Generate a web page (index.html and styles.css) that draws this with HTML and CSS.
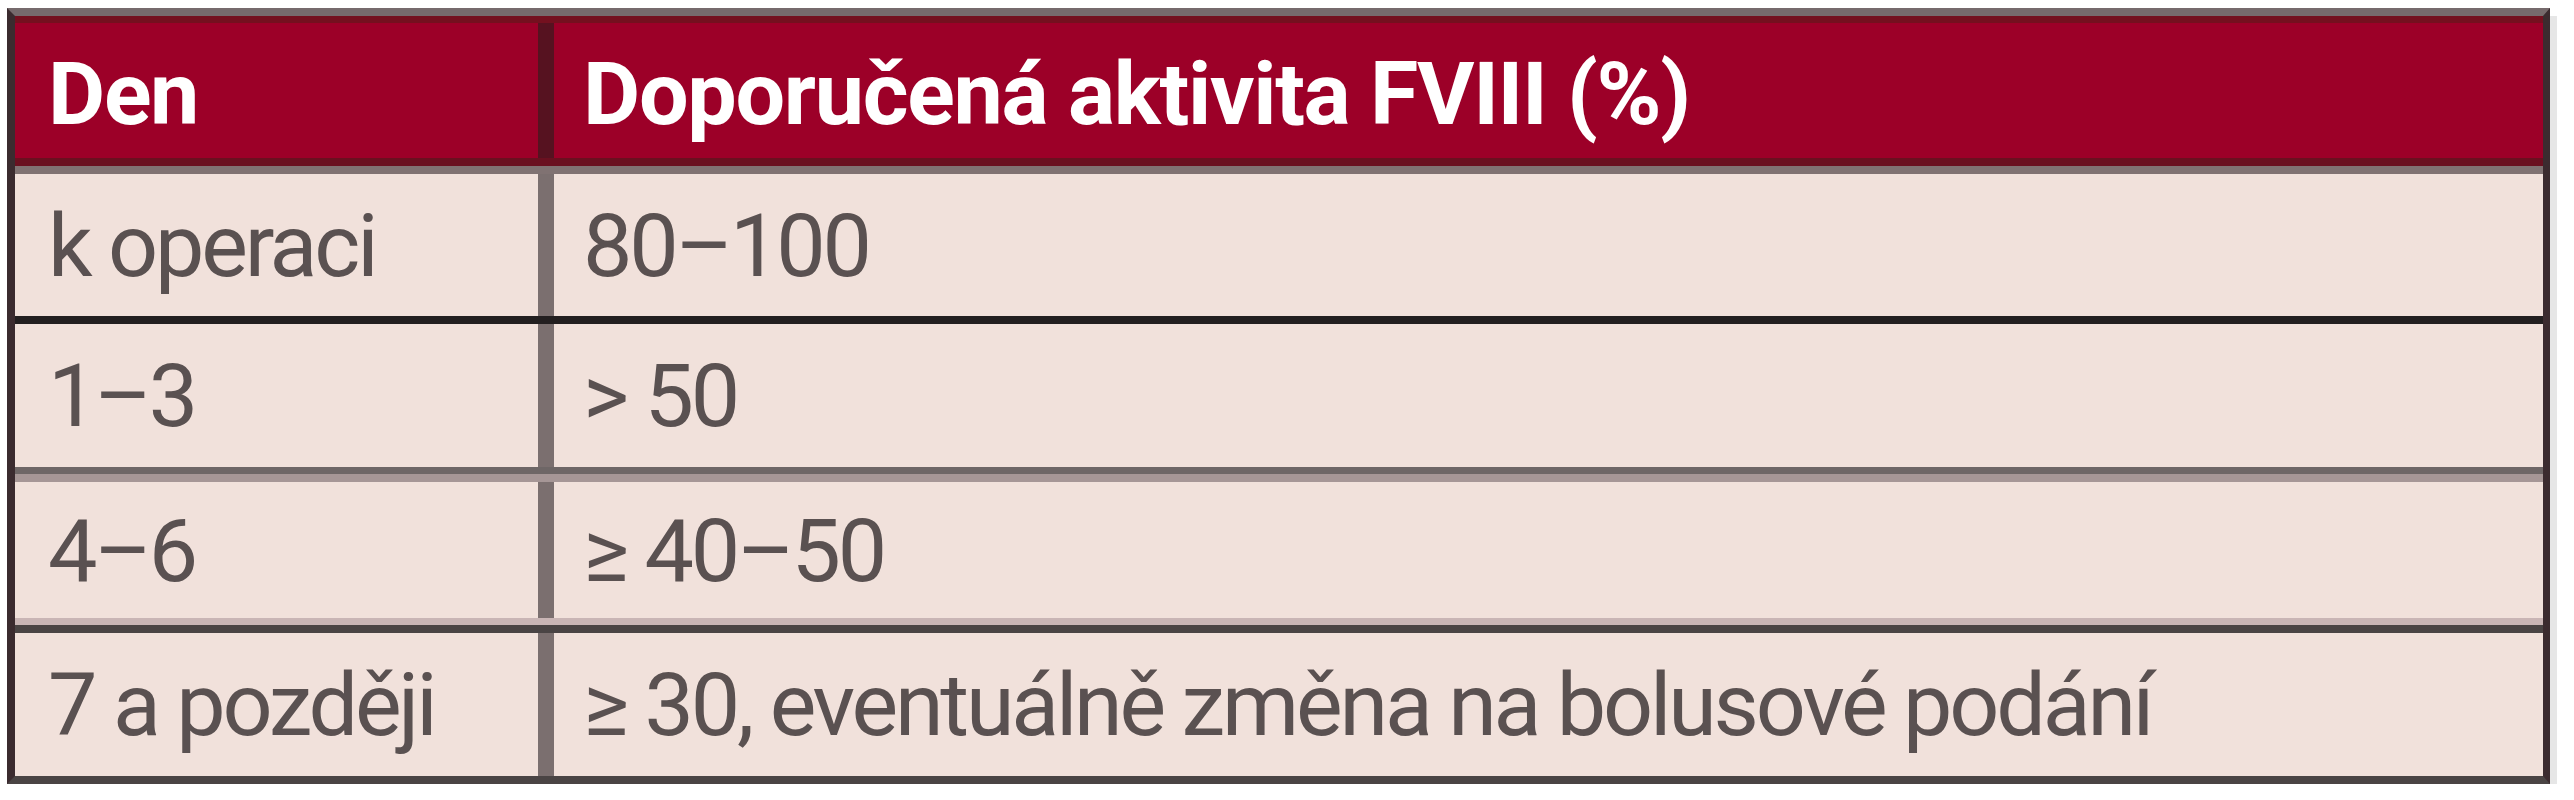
FILE: index.html
```html
<!DOCTYPE html>
<html lang="cs">
<head>
<meta charset="utf-8">
<title>Doporučená aktivita FVIII</title>
<link rel="stylesheet" href="styles.css">
</head>
<body>
<div class="table">
  <div class="row head">
    <div class="cell c1">Den</div>
    <div class="cell c2">Doporučená aktivita FVIII (%)</div>
  </div>
  <div class="row r1">
    <div class="cell c1">k operaci</div>
    <div class="cell c2">80–100</div>
  </div>
  <div class="row r2">
    <div class="cell c1">1–3</div>
    <div class="cell c2">&gt; 50</div>
  </div>
  <div class="row r3">
    <div class="cell c1">4–6</div>
    <div class="cell c2">≥ 40–50</div>
  </div>
  <div class="row r4">
    <div class="cell c1">7 a později</div>
    <div class="cell c2">≥ 30, eventuálně změna na bolusové podání</div>
  </div>
</div>
</body>
</html>
```

FILE: styles.css
```css
html, body {
  background: #ffffff;
}
body {
  margin: 8px 0 0 7px;
  font-family: Roboto, "Noto Sans", sans-serif;
}
.table {
  width: 2543px;
  box-sizing: border-box;
  border-left: 8px solid #3b2b2f;
  border-right: 7px solid #3b2b2f;
  border-top: 8px solid #766a6c;
  border-bottom: 8px solid #4a4444;
  background: #f1e1db;
  box-shadow: -7px 8px 0 #d9d9d9, 7px 8px 0 #e6e6e6;
}
.row {
  display: grid;
  grid-template-columns: 539px 1fr;
  box-sizing: border-box;
}
.cell {
  display: flex;
  align-items: center;
  font-size: 88px;
  color: #5a5151;
  letter-spacing: -3.2px;
}
.c1 {
  border-right: 16px solid #7b6f6f;
  padding-left: 33px;
}
.c2 {
  padding-left: 29px;
}
.head {
  background: #9c0028;
  border-top: 7px solid #74101f;
  border-bottom: 8px solid #6a1020;
  height: 150px;
}
.head .cell {
  color: #ffffff;
  font-weight: 700;
  letter-spacing: -1.3px;
  padding-top: 6px;
}
.head .c1 {
  border-right-color: #561220;
}
.r1 {
  border-top: 8px solid #807272;
  height: 150px;
}
.r2 {
  border-top: 8px solid #231f20;
  border-bottom: 7px solid #6e6666;
  height: 158px;
}
.r3 {
  border-top: 8px solid #a69696;
  border-bottom: 7px solid #c9b5b5;
  height: 151px;
}
.r4 {
  border-top: 8px solid #4a4444;
  height: 151px;
}
```
